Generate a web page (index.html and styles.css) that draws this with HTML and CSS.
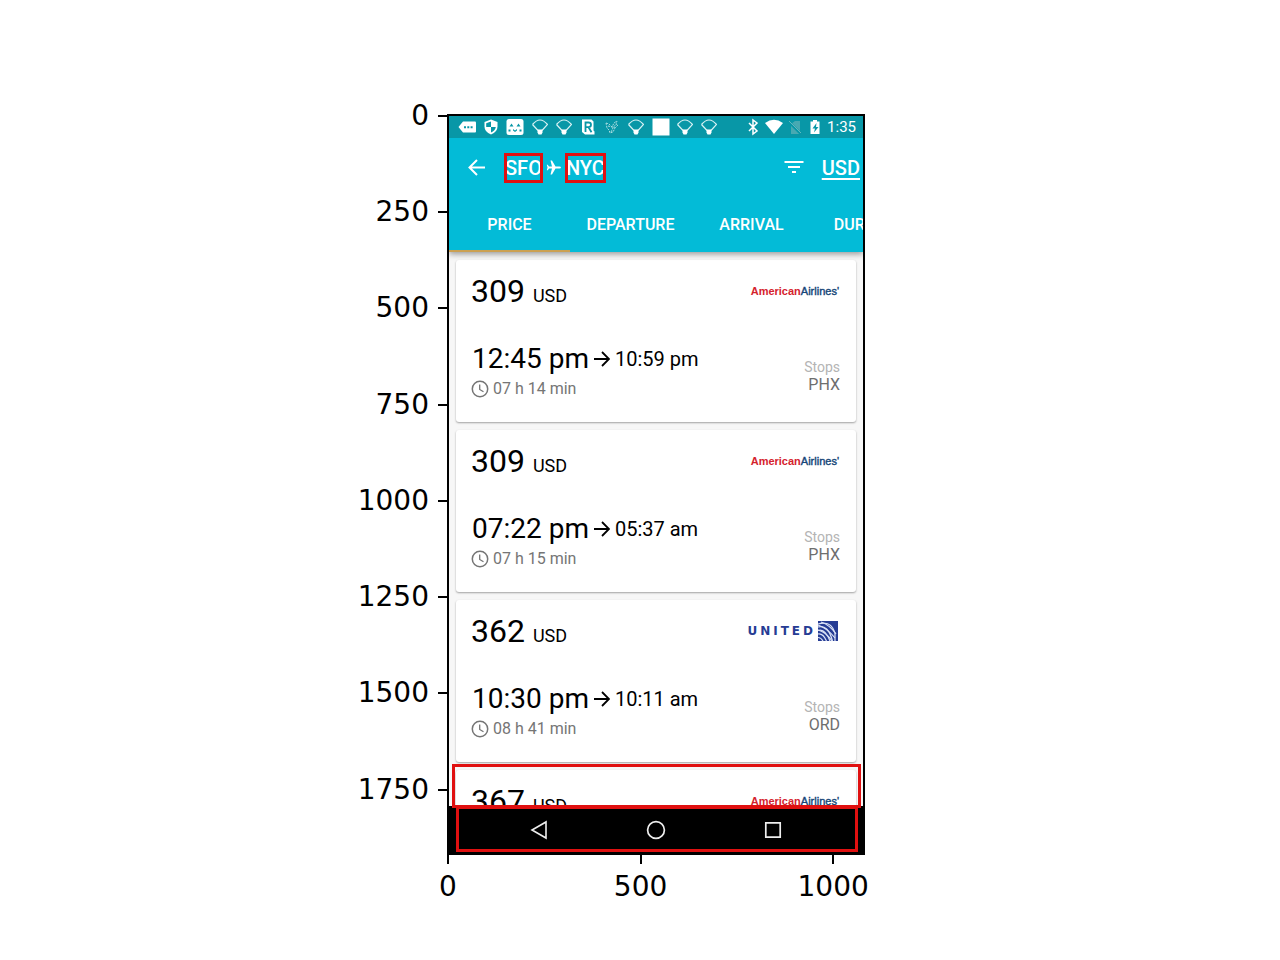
FILE: index.html
```html
<!DOCTYPE html>
<html lang="en">
<head>
<meta charset="utf-8">
<meta name="viewport" content="width=device-width, initial-scale=1">
<title>Flight search results</title>
<link rel="stylesheet" href="styles.css">
</head>
<body>
<svg class="defs" aria-hidden="true">
  <symbol id="fan" viewBox="0 0 16 16"><path d="M.5 5.500Q8-3.500 15.500 5.500L10 11.500M.5 5.500L6 11.500" fill="none" stroke="#d8f2f4" stroke-width="1.200"/><path d="M5.500 10.500h5v3l-1 2h-3l-1-2z" fill="#fff"/></symbol>
  <symbol id="arrow" viewBox="0 0 16 16"><path d="M0 8h14.500M8 1l7 7-7 7" fill="none" stroke="currentColor" stroke-width="1.800"/></symbol>
  <symbol id="clock" viewBox="0 0 18 18"><circle cx="9" cy="9" r="7.700" fill="none" stroke="currentColor" stroke-width="1.500"/><path d="M8.700 4.500v5l3.800 2.300" fill="none" stroke="currentColor" stroke-width="1.300"/></symbol>
</svg>
<main class="figure">
  <div class="y-axis">
    <span class="y-tick">0</span><span class="y-tick">250</span><span class="y-tick">500</span><span class="y-tick">750</span><span class="y-tick">1000</span><span class="y-tick">1250</span><span class="y-tick">1500</span><span class="y-tick">1750</span>
  </div>
  <div class="screen">
    <header class="header">
      <div class="status">
        <div class="notifications">
          <svg viewBox="0 0 16 16"><path d="M4 2.500h12q1 0 1 1v9q0 1-1 1H4L-.5 8z" fill="#fff"/><path d="M5 7.200h2v2H5zm3.300 0h2v2h-2zm3.300 0h2v2h-2z" fill="#0897a7"/></svg>
          <svg viewBox="0 0 16 16"><path d="M8 .5l6.500 2.500v4.500q0 5.500-6.500 8-6.500-2.500-6.500-8V3z" fill="#fff"/><path d="M8 2.500V8H3.200V4.300zM8 8h4.800q-.6 3.800-4.800 5.600z" fill="#0897a7"/></svg>
          <svg viewBox="0 0 16 16"><rect x="-.5" y="0" width="17" height="16" rx="2.500" fill="#fff"/><path d="M2.500 7.500l2-3 2 3zM9.500 7.500l2-3 2 3zM1.500 10.500h2v2h-2zM12.500 10.500h2v2h-2zM6 10l2 1.500L10 10v1.500l-2 1.500-2-1.500z" fill="#0897a7"/></svg>
          <svg><use href="#fan"/></svg>
          <svg><use href="#fan"/></svg>
          <svg viewBox="0 0 16 16"><path d="M2 .5h9.500l2 2v9l1 1v3H5L2 13z" fill="#fff"/><path d="M5.500 13V3.500h3q2.500 0 2.500 2.300T8.500 8.200h-3m3 0l3 5" fill="none" stroke="#0897a7" stroke-width="1.800"/></svg>
          <svg viewBox="0 0 16 16"><path d="M2 4l3 1 3 3 2-4 3-2-1 3 2 1-3 3-2 4-3 1-1-3-2-2zM4 7l4 1 3 1M7 13l2-4 3-4" fill="none" stroke="#a8dce0" stroke-dasharray="2 1"/></svg>
          <svg><use href="#fan"/></svg>
          <svg viewBox="0 0 16 16"><path d="M-.5-.5h17v17h-17z" fill="#fff"/></svg>
          <svg><use href="#fan"/></svg>
          <svg><use href="#fan"/></svg>
        </div>
        <div class="system">
          <svg viewBox="0 0 16 16"><path d="M4 4l8 8-4 3V1l4 3-8 8" fill="none" stroke="#fff" stroke-width="1.500"/></svg>
          <svg class="wifi" viewBox="0 0 18 16"><path d="M0 4q9-6.500 18 0L9 15z" fill="#fff"/></svg>
          <svg viewBox="0 0 16 16"><path d="M4 5l4-3h5v13H4z" fill="#48a9b2"/><path d="M1 2l13 13" stroke="#0897a7" stroke-width="2.500"/><path d="M2 2l12 12" stroke="#62b8c0"/></svg>
          <svg viewBox="0 0 16 16"><path d="M3.500 2.500h2.500V1h4v1.500h2.500v12.500h-9z" fill="#fff"/><path d="M9.500 4L5.500 9.500H8L7 13.500 11.500 8H9z" fill="#0897a7"/></svg>
          <time>1:35</time>
        </div>
      </div>
      <div class="toolbar">
        <button class="icon-button back" aria-label="Back"><svg viewBox="0 0 18 18"><path d="M17 8.500H2M9 1L1.500 8.500 9 16" fill="none" stroke="#fff" stroke-width="2"/></svg></button>
        <h1 class="route"><span class="marked">SFO</span><svg viewBox="0 0 16 16" role="img" aria-label="to"><path d="M15 7.500q0-1-1.500-1H9.500L6 .5H4.500L6 6.500H3L1.800 4.700H.8l.7 2.800-.7 2.800h1L3 8.500h3l-1.500 6H6l3.500-6h4q1.500 0 1.500-1z" fill="#fff"/></svg><span class="marked">NYC</span></h1>
        <button class="icon-button" aria-label="Filter"><svg viewBox="0 0 20 18"><path d="M.5 3h19M4 8h12M8 13h4" stroke="#fff" stroke-width="2"/></svg></button>
        <a class="currency" href="#">USD</a>
      </div>
      <nav class="tabs" aria-label="Sort by"><button class="tab active">PRICE</button><button class="tab">DEPARTURE</button><button class="tab">ARRIVAL</button><button class="tab">DURATION</button></nav>
    </header>
    <section class="results">
      <article class="card">
        <div class="top"><p class="price">309 <small>USD</small></p><span class="american"><b>American</b><span>Airlines'</span></span></div>
        <div class="details"><div><p class="times">12:45 pm<svg><use href="#arrow"/></svg><span>10:59 pm</span></p><p class="duration"><svg><use href="#clock"/></svg>07 h 14 min</p></div><p class="stops"><small>Stops</small>PHX</p></div>
      </article>
      <article class="card">
        <div class="top"><p class="price">309 <small>USD</small></p><span class="american"><b>American</b><span>Airlines'</span></span></div>
        <div class="details"><div><p class="times">07:22 pm<svg><use href="#arrow"/></svg><span>05:37 am</span></p><p class="duration"><svg><use href="#clock"/></svg>07 h 15 min</p></div><p class="stops"><small>Stops</small>PHX</p></div>
      </article>
      <article class="card">
        <div class="top"><p class="price">362 <small>USD</small></p><span class="united">UNITED<svg viewBox="0 0 20 20"><path d="M0 0h20v20H0z" fill="#263c94"/><g fill="none" stroke="#dbe3f7" stroke-width="1.200"><path d="M0 3Q13-1 17 12v8M0 6Q10 3 14.500 20M0 9.500Q7 7 12 20M0 13q5-1 8.500 7M0 16.500q3 0 5 3.500"/><path d="M3 1q9 3 15 12M0 4q9 3 17 13M0 9q8 2 14 11"/></g></svg></span></div>
        <div class="details"><div><p class="times">10:30 pm<svg><use href="#arrow"/></svg><span>10:11 am</span></p><p class="duration"><svg><use href="#clock"/></svg>08 h 41 min</p></div><p class="stops"><small>Stops</small>ORD</p></div>
      </article>
      <article class="card">
        <div class="top"><p class="price">367 <small>USD</small></p><span class="american"><b>American</b><span>Airlines'</span></span></div>
      </article>
    </section>
    <nav class="system-nav" aria-label="System">
      <button class="icon-button" aria-label="Back"><svg viewBox="0 0 18 18"><path d="M16 1v16L2 9z" fill="none" stroke="#eee" stroke-width="1.600"/></svg></button>
      <button class="icon-button" aria-label="Home"><svg viewBox="0 0 18 18"><circle cx="9" cy="9" r="8.400" fill="none" stroke="#eee" stroke-width="1.700"/></svg></button>
      <button class="icon-button" aria-label="Overview"><svg viewBox="0 0 18 18"><path d="M1.800 1.800h14.400v14.400H1.800z" fill="none" stroke="#eee" stroke-width="1.700"/></svg></button>
    </nav>
    <div class="card-mark"></div>
  </div>
  <div class="x-axis"><span class="x-tick">0</span><span class="x-tick">500</span><span class="x-tick">1000</span></div>
</main>
</body>
</html>
```
FILE: styles.css
```css
* { box-sizing: border-box; }
body { margin: 0; background: #fff; color: #000; font-family: Roboto, sans-serif; }
h1, p { margin: 0; font-weight: 400; }
button { padding: 0; border: 0; background: none; color: inherit; font: inherit; cursor: pointer; }
svg { display: block; flex: none; width: 16px; height: 16px; overflow: visible; }
.defs { position: absolute; width: 0; height: 0; }

.figure { display: grid; grid-template-columns: 447fr 418fr 415fr; padding: 114px 0 48px; }

.y-axis { display: grid; grid-template-rows: repeat(7, 250fr) 170fr; padding: 2px 0 0; font: 28px/28px "DejaVu Sans", sans-serif; }
.y-tick { display: flex; justify-content: flex-end; align-items: center; gap: 9px; height: 28px; margin-top: -14px; }
.y-tick::after { content: ""; width: 9px; height: 2px; background: #000; }
.x-axis { grid-column: 2; display: grid; grid-template-columns: minmax(0, 500fr) minmax(0, 500fr) minmax(0, 80fr); padding: 0 1px; font: 28px/28px "DejaVu Sans", sans-serif; }
.x-tick { display: flex; flex-direction: column; align-items: center; gap: 9px; width: 80px; margin-left: -40px; }
.x-tick::before { content: ""; width: 2px; height: 9px; background: #000; }

.screen { position: relative; min-width: 0; border: 2px solid #000; overflow: hidden; background: #f7f7f7; }
.header { position: relative; background: #03bbd7; color: #fff; box-shadow: 0 2px 6px rgba(0, 0, 0, .4); }
.status { display: flex; justify-content: space-between; align-items: center; height: 22px; padding: 0 7px 1px 10px; background: #0897a7; }
.notifications { display: flex; justify-content: space-between; flex: 0 0 258px; }
.system { display: flex; align-items: center; gap: 4px; font-size: 15px; }
.wifi { width: 18px; }

.toolbar { display: flex; align-items: center; height: 59px; padding: 0 3px 0 19px; font-size: 20px; line-height: 24px; font-weight: 500; }
.icon-button svg { width: 18px; height: 18px; }
.toolbar .icon-button:not(.back) svg { width: 20px; }
.route { display: flex; align-items: center; gap: 4px; flex: 1; margin-left: 19px; font-size: 20px; font-weight: 500; }
.marked { position: relative; }
.marked::after { content: ""; position: absolute; inset: -3px -1px; border: 3px solid #e01010; }
.currency { margin-left: 18px; color: #fff; text-underline-offset: 3px; }

.tabs { display: grid; grid-auto-flow: column; grid-auto-columns: 121px; height: 55px; overflow: hidden; font-size: 16px; font-weight: 500; }
.tab { padding-top: 2px; border-bottom: 2px solid transparent; }
.active { border-color: #cba052; }

.results { display: flex; flex-direction: column; gap: 8px; height: 554px; padding: 8px 7px 0; overflow: hidden; }
.card { flex: none; padding: 13px 16px 22px 15px; border-radius: 3px; background: #fff; box-shadow: 0 1px 2px rgba(0, 0, 0, .35); }
.top, .details { display: flex; justify-content: space-between; }
.top { align-items: center; }
.price { font-size: 32px; line-height: 36px; }
.price small { font-size: 18px; line-height: 18px; }
.american { display: flex; margin-right: 1px; color: #d5222d; font: 11px/16px "Liberation Sans", Arial, sans-serif; }
.american span { color: #164678; -webkit-text-stroke: .4px; }
.united { display: flex; align-items: center; gap: 2px; margin-right: 2px; color: #263c94; font: 700 12px/16px "DejaVu Sans", sans-serif; letter-spacing: 3px; }
.united svg { width: 20px; height: 20px; }
.details { align-items: flex-end; margin-top: 34px; padding-bottom: 1px; }
.times { display: flex; align-items: center; gap: 5px; padding-left: 1px; font-size: 28px; line-height: 32px; }
.times span { font-size: 20px; }
.duration { display: flex; align-items: center; gap: 4px; margin-top: 4px; color: #757575; font-size: 16px; line-height: 20px; }
.duration svg { width: 18px; height: 18px; }
.stops { display: flex; flex-direction: column; align-items: flex-end; padding-bottom: 5px; color: #6e6e6e; font-size: 16px; line-height: 18px; }
.stops small { color: #b4b4b4; font-size: 14px; }

.system-nav { position: relative; display: flex; justify-content: center; align-items: center; gap: 99px; height: 47px; background: #000; }
.system-nav::after { content: ""; position: absolute; inset: 0 5px 1px 7px; border: 3px solid #e01010; pointer-events: none; }
.card-mark { position: absolute; inset: auto 2px 45px 3px; height: 44px; border: 3px solid #e01010; pointer-events: none; }
```
